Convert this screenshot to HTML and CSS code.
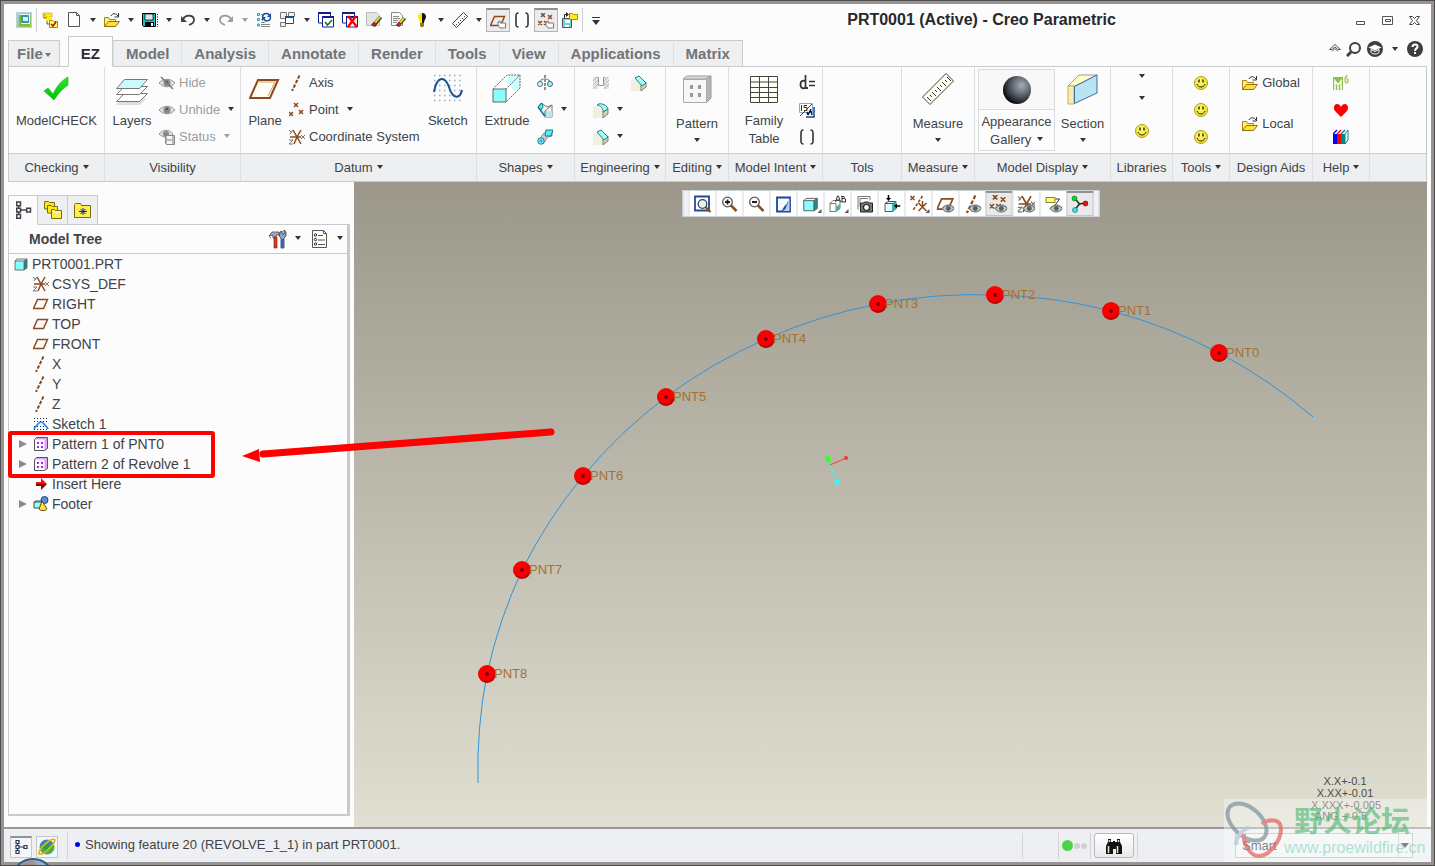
FILE: index.html
```
<!DOCTYPE html>
<html lang="en">
<head>
  <meta charset="UTF-8">
  <meta name="viewport" content="width=device-width, initial-scale=1.0">
  <title>PRT0001 (Active) - Creo Parametric</title>
  <link rel="stylesheet" href="styles.css">
</head>
<body>
  <!-- icon sprite -->
  <svg class="sprite" aria-hidden="true">
    <defs>
      <radialGradient id="ball" cx="45%" cy="40%" r="60%"><stop offset="0" stop-color="#f00"/><stop offset=".7" stop-color="#f80000"/><stop offset="1" stop-color="#a00000"/></radialGradient>
      <radialGradient id="sphere" cx="66%" cy="34%" r="70%"><stop offset="0" stop-color="#a4adb6"/><stop offset=".4" stop-color="#6a727a"/><stop offset=".8" stop-color="#2c3035"/><stop offset="1" stop-color="#050505"/></radialGradient>
      <radialGradient id="yolk" cx="45%" cy="40%" r="60%"><stop offset="0" stop-color="#ffff70"/><stop offset="1" stop-color="#f2dc1e"/></radialGradient>
      <linearGradient id="tick" x1="0" y1="0" x2="0" y2="1"><stop offset="0" stop-color="#2be82b"/><stop offset="1" stop-color="#00c000"/></linearGradient>
      <linearGradient id="appbg" x1="0" y1="0" x2="1" y2="1"><stop offset="0" stop-color="#9fd3e8"/><stop offset="1" stop-color="#8cc63f"/></linearGradient>
    </defs>
    <symbol id="i-app" viewBox="0 0 16 16"><rect x=".5" y=".5" width="15" height="15" fill="url(#appbg)" stroke="#b5d3e0"/><path d="M3 2h11v10H3z" fill="#e8f6fa"/><path d="M3 3h2v9h8v2H3z" fill="#8cb820"/><path d="M5 3h8v8H5z" fill="#3f93b5"/><path d="M7 5h5v4H7z" fill="#d9f2f7"/></symbol>
    <symbol id="i-tag" viewBox="0 0 16 16"><path d="M1 1h9v4H1z" fill="#ffe81a" stroke="#c8a400" stroke-width=".6"/><path d="M2 3h1M2 5v1h3v6h3" fill="none" stroke="#555"/><path d="M4 6h6v3H4z" fill="#ffe81a"/><path d="M7.500 8.500h3l1 1h4v6h-8z" fill="#ff6" stroke="#a88b00"/><path d="M9 12l2 2 3-4" fill="none" stroke="#c00" stroke-width="1.500"/></symbol>
    <symbol id="i-new" viewBox="0 0 16 16"><path d="M2.500 .5h8l3 3v11h-11z" fill="#fdfdfd" stroke="#555"/><path d="M10.500 .5v3h3" fill="none" stroke="#555"/></symbol>
    <symbol id="i-open" viewBox="0 0 16 16"><path d="M.5 14.500v-9h4l1 2h6v2" fill="#ffef7a" stroke="#a8861a"/><path d="M.5 14.500l4-5h11l-4 5z" fill="#ffe036" stroke="#8f7112"/><path d="M7 4c1-3 5-3 7 0M14.500 1v4h-4" fill="none" stroke="#333"/></symbol>
    <symbol id="i-save" viewBox="0 0 16 16"><path d="M.5 1.500h13v13h-12l-1-1z" fill="#17c3c3" stroke="#000"/><path d="M3 2h8v6H3z" fill="#fff" stroke="#000" stroke-width=".8"/><path d="M4 4h6M4 6h6" stroke="#aaa" stroke-width=".7"/><path d="M3 10h9v4H3z" fill="#000"/><path d="M9 11h2v3H9z" fill="#fff"/><path d="M15.500 2v13" stroke="#000" stroke-dasharray="1 1.500"/></symbol>
    <symbol id="i-undo" viewBox="0 0 16 16"><path d="M3 7c3-5 11-4 11 1 0 3-2 4-5 5" fill="none" stroke="currentColor" stroke-width="1.800"/><path d="M1 4v6h6z" fill="currentColor"/></symbol>
    <symbol id="i-redo" viewBox="0 0 16 16"><path d="M13 7C10 2 2 3 2 8c0 3 2 4 5 5" fill="none" stroke="currentColor" stroke-width="1.800"/><path d="M15 4v6H9z" fill="currentColor"/></symbol>
    <symbol id="i-regen" viewBox="0 0 16 16"><path d="M1.500 1.500h2v2h-2zM1.500 6.500h2v2h-2zM1.500 12h2v2h-2z" fill="#8ff" stroke="#33a0a8"/><path d="M5 10.500h4M5 12.500h9M5 14.500h9M5 2.500h1M5 7.500h1" stroke="#888"/><path d="M6.500 5c0-4 6-5 7-1M14.500 5c0 5-6 5-7 1" fill="none" stroke="#1c4e9c" stroke-width="1.500"/><path d="M15 1v4h-4zM6 9V5h4z" fill="#1c4e9c"/></symbol>
    <symbol id="i-windows" viewBox="0 0 16 16"><path d="M.5 10.500h5v4h-5zM8.500 .5h6v4h-6zM.5 .5h6v6h-6z" fill="#eee" stroke="#777"/><path d="M5.500 4.500h8v7h-8z" fill="#fff" stroke="#1f4a8c"/><path d="M5 4h9v2H5z" fill="#1f4a8c"/></symbol>
    <symbol id="i-winback" viewBox="0 0 16 16"><path d="M.5 1h12v10H.5z" fill="#fff" stroke="#10218f"/><path d="M0 0h13v2H0z" fill="#10218f"/><path d="M4.500 5h11v10h-11z" fill="#fff" stroke="#10218f"/><path d="M4 4h12v2H4z" fill="#10218f"/></symbol>
    <symbol id="i-wincheck" viewBox="0 0 16 16"><use href="#i-winback"/><path d="M7 10l2.500 3L14 8" fill="none" stroke="#15752b" stroke-width="1.600"/></symbol>
    <symbol id="i-winx" viewBox="0 0 16 16"><use href="#i-winback"/><path d="M6 4l9 11M14 4L6 15" stroke="#f00" stroke-width="2.400"/></symbol>
    <symbol id="i-erase" viewBox="0 0 16 16"><path d="M.5 .5h10l3 3v10H.5z" fill="#e4e4e0" stroke="#bbb"/><path d="M5 13l8-9 3 2-7 9z" fill="#222"/><path d="M8 10l5-6 2 1.500-5 6z" fill="#d9cf2c"/><path d="M6 12l2-2 2 2-2 3z" fill="#c22"/></symbol>
    <symbol id="i-erase2" viewBox="0 0 16 16"><path d="M1.500 .5h8l3 3v10h-11z" fill="#fafafa" stroke="#888"/><path d="M3 4.500h6M3 6.500h7M3 8.500h5M3 10.500h4" stroke="#888"/><path d="M6 13l7-8 3 2-7 8z" fill="#222"/><path d="M9 10l4-5 2 1.500-4 5z" fill="#d9cf2c"/><path d="M7 12l2-2 2 2-2 3z" fill="#c22"/></symbol>
    <symbol id="i-bulb" viewBox="0 0 16 16"><path d="M8 1a4 4 0 0 0-4 4c0 2 2 3 2 6h2z" fill="#ffe600"/><path d="M8 1a4 4 0 0 1 4 4c0 2-2 3-2 6H8z" fill="#111"/><path d="M6 11h4v3l-1 1H7l-1-1z" fill="#8a7d10"/></symbol>
    <symbol id="i-ruler" viewBox="0 0 16 16"><path d="M.5 11.500L11.500 .5l4 4L4.500 15.500z" fill="#f8f8f0" stroke="#444"/><path d="M4 12l1 1M6 10l1.500 1.500M8 8l1 1M10 6l1.500 1.500M12 4l1 1" stroke="#444"/></symbol>
    <symbol id="i-plane" viewBox="0 0 16 16"><path d="M4.500 3.500h10l-4 9H.5z" fill="none" stroke="#8c4a1d" stroke-width="1.500"/></symbol>
    <symbol id="i-hand" viewBox="0 0 16 16"><path d="M8 9l2-1v2h5.500v5H10l-2-3z" fill="#fff" stroke="#777"/></symbol>
    <symbol id="i-brackets" viewBox="0 0 16 16"><path d="M4.500 1C2 1 2 2 2 4v8c0 2 0 3 2.500 3M11.500 1C14 1 14 2 14 4v8c0 2 0 3-2.500 3" fill="none" stroke="#333" stroke-width="1.600"/></symbol>
    <symbol id="i-points" viewBox="0 0 16 16"><path d="M5 1l4 4M9 1L5 5M0 10l4 4M4 10l-4 4M10 8l4 4M14 8l-4 4" stroke="#8c4a1d" stroke-width="1.500"/></symbol>
    <symbol id="i-points4" viewBox="0 0 16 16"><path d="M3 0l4 4M7 0L3 4M10 2l4 4M14 2l-4 4M0 8l4 4M4 8l-4 4M6 8l4 4M10 8l-4 4" stroke="#8c4a1d" stroke-width="1.500"/></symbol>
    <symbol id="i-axis" viewBox="0 0 16 16"><path d="M10.500 .5L3 16" fill="none" stroke="#8c4a1d" stroke-width="2" stroke-dasharray="3.500 1.500"/></symbol>
    <symbol id="i-csys" viewBox="0 0 16 16"><path d="M8 8L4 1M8 8l4-7M8 8H1M8 8l-3 7M8 8l4 7M8 8h4" stroke="#8c4a1d" stroke-width="1.500"/><path d="M0 1l3 3M4 1L1 5M12 6l4 4M16 6l-4 4M0 11h4l-4 4h4" fill="none" stroke="#777"/></symbol>
    <symbol id="i-foldersave" viewBox="0 0 16 16"><path d="M.5 6.500h9v9h-9z" fill="#6dd5d5" stroke="#456"/><path d="M3 8h5v3H3zM3 13h4v2H3z" fill="#fff"/><path d="M7.500 1.500h3l1 1h4v5h-8z" fill="#ffec1c" stroke="#a88b00"/><path d="M2.500 6V2.500H5" fill="none" stroke="#222"/><path d="M4 0l3 2.500L4 5z" fill="#222"/></symbol>
    <symbol id="i-eye" viewBox="0 0 16 16"><path d="M0 8c4-5 12-5 16 0-4 5-12 5-16 0z" fill="#ddd" stroke="#999"/><circle cx="8" cy="8" r="3.500" fill="#888"/><circle cx="8" cy="7" r="1.200" fill="#555"/></symbol>
    <symbol id="i-hide" viewBox="0 0 16 16"><use href="#i-eye"/><path d="M2 2l12 12" stroke="#777" stroke-width="1.500"/></symbol>
    <symbol id="i-status" viewBox="0 0 16 16"><path d="M0 5c4-5 10-5 14 0-4 4-10 4-14 0z" fill="#ddd" stroke="#999"/><circle cx="7" cy="5" r="3" fill="#888"/><path d="M6.500 6.500h9v9h-8l-1-1z" fill="#bbb" stroke="#888"/><path d="M8 7h5v3H8zM8 12h5v3H8z" fill="#f4f4f4"/></symbol>
    <symbol id="i-eyelet" viewBox="0 0 16 16"><path d="M5 12c3-4 8-4 11 0-3 4-8 4-11 0z" fill="#d0ccb4" stroke="#777"/><circle cx="10.500" cy="12" r="2.200" fill="#3f6485"/></symbol>
    <symbol id="i-cube" viewBox="0 0 16 16"><path d="M2 5h9v9H2z" fill="#8ff"/><path d="M2 5l2-2h10l-3 2z" fill="#d5ffff"/><path d="M11 5l3-2v9l-3 2z" fill="#1f8c90"/><path d="M2 5h9v9H2zM2 5l2-2h10l-3 2M14 3v9l-3 2" fill="none" stroke="#555" stroke-width=".8"/></symbol>
    <symbol id="i-revolve" viewBox="0 0 16 16"><path d="M8 0v16" stroke="#222" stroke-dasharray="3 1"/><path d="M2 7c2-4 10-4 12 0M10 4l3 3M6 4L3 6" fill="none" stroke="#888"/><circle cx="3" cy="9" r="2.500" fill="#cff" stroke="#567"/><circle cx="13" cy="9" r="2.500" fill="#8ff" stroke="#567"/></symbol>
    <symbol id="i-blend" viewBox="0 0 16 16"><path d="M4 1l6 4 5-2v12H8L1 5z" fill="#eef8f8" stroke="#777"/><path d="M7 9h8v6H8z" fill="#bfe6e6"/><path d="M8 9l7-6M8 9v6" stroke="#777"/><path d="M1 5l4-4 1 4-2 3z" fill="#5ee" stroke="#157f88"/><path d="M1 5l7 9" stroke="#157f88" stroke-width="1.500"/></symbol>
    <symbol id="i-sweep" viewBox="0 0 16 16"><path d="M1 10c4 0 3-5 8-7h6v4c-6 0-6 5-9 8" fill="#ccc" stroke="#888"/><path d="M9 1h7l-2 6H8z" fill="#5ee" stroke="#157f88"/><circle cx="4" cy="12" r="3.200" fill="#7ff" stroke="#157f88"/><circle cx="4" cy="12" r="1" fill="#fff" stroke="#157f88"/></symbol>
    <symbol id="i-hole" viewBox="0 0 16 16"><path d="M0 2h5v12H0zM11 2h5v12h-5z" fill="#e2e2e2"/><path d="M0 6l4-4M0 10l5-5M0 14l5-5M11 6l4-4M11 10l5-5M11 14l5-5" stroke="#bbb"/><path d="M4 2.500h1.500v8h5v-8H12" fill="none" stroke="#999"/></symbol>
    <symbol id="i-round" viewBox="0 0 16 16"><path d="M0 4h5l5 5v7H0z" fill="#f0efe0"/><path d="M10 10l5-3v5l-5 4z" fill="#d6d4b4" stroke="#666" stroke-width=".8"/><path d="M4 3c1-2 9-2 11 4l-5 3c0-4-2-6-6-7z" fill="#9ff" stroke="#39737a"/></symbol>
    <symbol id="i-chamfer" viewBox="0 0 16 16"><path d="M0 4h5l5 6v6H0z" fill="#f0efe0"/><path d="M10 10l5-3v5l-5 4z" fill="#d6d4b4" stroke="#666" stroke-width=".8"/><path d="M4 3l4-2 7 7-4 3z" fill="#9ff" stroke="#39737a"/></symbol>
    <symbol id="i-dim" viewBox="0 0 16 16"><path d="M6.500 0v14M6.500 7c-1-2-5-2-5 2.500s4 4.500 5 2.500M10 6.500h6M10 10.500h6" fill="none" stroke="#333" stroke-width="1.700"/><path d="M7 12h2v2H7z" fill="#333"/></symbol>
    <symbol id="i-switch" viewBox="0 0 16 16"><path d="M.5 1.500h13v9H.5z" fill="#fff" stroke="#88a8d0"/><path d="M2.500 3v6M8 3.500H5v2h3v3H5" fill="none" stroke="#333"/><path d="M7 15h8V5" fill="none" stroke="#1446a0" stroke-width="1.500"/><path d="M1 14L13 2" stroke="#1446a0"/><path d="M8 10l1 3M12 7l-3 6M12 9l1 4" stroke="#111" stroke-width="1.400"/></symbol>
    <symbol id="i-smile" viewBox="0 0 16 16"><circle cx="8" cy="8" r="6.500" fill="url(#yolk)" stroke="#a9a02a"/><path d="M6 4.500v3M10 4.500v3" stroke="#222" stroke-width="1.400"/><path d="M4 9c1.500 4 6.500 4 8 0" fill="none" stroke="#222"/></symbol>
    <symbol id="i-m6" viewBox="0 0 16 16"><path d="M0 2h10v13H0z" fill="#8fc048"/><path d="M2 15V6l3 4 3-4v9M5 11v4" fill="none" stroke="#fff" stroke-width="1.500"/><path d="M14.500 .8c-3 0-3 7-1 7s2-4 0-4" fill="none" stroke="#a5cc66" stroke-width="1.500"/></symbol>
    <symbol id="i-heart" viewBox="0 0 16 16"><path d="M8 15L2 9C0 6 1 2 4 2c2 0 3 1 4 3 1-2 2-3 4-3 3 0 4 4 2 7z" fill="#f00"/></symbol>
    <symbol id="i-books" viewBox="0 0 16 16"><path d="M0 5l4-4h11l-3 4z" fill="#fff"/><path d="M0 5h4v10H0z" fill="#00f"/><path d="M4 5h4v10H4z" fill="#f00"/><path d="M8 5h4v10H8z" fill="#088"/><path d="M12 5l3-4v10l-3 4z" fill="#fff" stroke="#088"/><path d="M0 5l4-4" stroke="#00f" stroke-width="1.500"/><path d="M4 5l4-4" stroke="#f00" stroke-width="1.500"/><path d="M8 5l4-4" stroke="#088" stroke-width="1.500"/></symbol>
    <symbol id="i-tree" viewBox="0 0 16 16"><path d="M3 1.500h3v3H3zM3 6.500h3v3H3zM3 11.500h3v3H3zM11 6.500h3v3h-3zM4.500 4.500v2M4.500 9.500v2M6 8h5" fill="none" stroke="currentColor" stroke-width="1.200"/></symbol>
    <symbol id="i-folders" viewBox="0 0 20 20"><path d="M1.500 9V1.500h4l1 1h5V9z" fill="#ffe81a" stroke="#7a6a10"/><path d="M4.500 13V5.500h4l1 1h5V13z" fill="#ffe81a" stroke="#7a6a10"/><path d="M8.500 18.500v-9h3l1 1h6v8z" fill="#ffee4c" stroke="#7a6a10"/><path d="M10 12h7" stroke="#fff"/></symbol>
    <symbol id="i-favorites" viewBox="0 0 20 20"><path d="M1.500 17.500v-13l1-1h5l1 2h9v12z" fill="#ffee4c" stroke="#7a6a10"/><path d="M10 8v7M6 11.500h8M7.500 9l5 5M12.500 9l-5 5" stroke="#0a1ec0"/></symbol>
    <symbol id="i-tools" viewBox="0 0 20 20"><path d="M1 7l3-4h7v3H8v3H5V6z" fill="#aab" stroke="#444" stroke-width=".8"/><path d="M6 8h3v11H6z" fill="#d33f1c" stroke="#711" stroke-width=".6"/><path d="M12 3l2-1v3h2V1l2 2v4l-2 2v10h-3V9l-2-2z" fill="#8ea6cf" stroke="#333" stroke-width=".8"/><path d="M13 10h3v8h-3z" fill="#2e62c8"/><path d="M1 7l2 2" stroke="#1aa"/></symbol>
    <symbol id="i-list" viewBox="0 0 20 20"><path d="M2.500 1.500h11l3 3v14h-14z" fill="#fffff6" stroke="#555"/><path d="M13.500 1.500v3h3M8 6.500h5M8 11h7M8 15.500h7" fill="none" stroke="#555"/><circle cx="5.500" cy="6" r="1.200" fill="#fff" stroke="#222"/><circle cx="5.500" cy="10.500" r="1.200" fill="#fff" stroke="#222"/><circle cx="5.500" cy="15" r="1.200" fill="#fff" stroke="#222"/></symbol>
    <symbol id="i-sketch" viewBox="0 0 16 16"><path d="M1 2.500h14M1 5.500h14M1 10.500h14M1 13.500h14" stroke="#124" stroke-dasharray="1 2"/><path d="M1 13c1-2 2-3 3-4 3-4 5-4 8 0 1 1 2 2 3 4" fill="none" stroke="#1a86f0" stroke-width="1.600"/></symbol>
    <symbol id="i-pattern" viewBox="0 0 16 16"><path d="M1.500 3.500h10v10h-10z" fill="#fbf5ff"/><path d="M1.500 3.500l2-2h11l-3 2zM11.500 3.500l3-2v11l-3 2z" fill="#d9a8f0"/><path d="M1.500 3.500v11h10l3-2v-11h-11z" fill="none" stroke="#555"/><path d="M4 6h2v2H4zM8 6h2v2H8zM4 10h2v2H4zM8 10h2v2H8z" fill="#9a30d8"/></symbol>
    <symbol id="i-insert" viewBox="0 0 16 16"><path d="M3 6h5V2l6 6H3z" fill="#f01010"/><path d="M3 8h11l-6 6v-4H3z" fill="#8c0000"/></symbol>
    <symbol id="i-footer" viewBox="0 0 16 16"><path d="M1 6h8v6H1z" fill="#9ff" stroke="#355"/><path d="M1 6l2-1h8" fill="none" stroke="#355"/><circle cx="11.500" cy="4" r="3.500" fill="#5b8be0" stroke="#223d7a"/><path d="M9 5l5 8c-1 2-7 2-8 0z" fill="#ffe23c" stroke="#5c4a08"/></symbol>
    <symbol id="i-mag" viewBox="0 0 18 18"><path d="M10 10l6 6" stroke="#8c4a1d" stroke-width="2.500"/><circle cx="7" cy="7" r="4.800" fill="#fdfdfd" stroke="#555" stroke-width="1.300"/></symbol>
    <symbol id="i-fit" viewBox="0 0 18 18"><path d="M1.500 1.500h14v14h-14z" fill="#fff" stroke="#1f4a9c" stroke-width="1.800"/><path d="M12 12l5 5" stroke="#8c4a1d" stroke-width="2.200"/><circle cx="9" cy="9" r="4.300" fill="#e6f2f8" stroke="#444" stroke-width="1.300"/></symbol>
    <symbol id="i-zoomin" viewBox="0 0 18 18"><use href="#i-mag"/><path d="M7 4.500v5M4.500 7h5" stroke="#222" stroke-width="1.800"/></symbol>
    <symbol id="i-zoomout" viewBox="0 0 18 18"><use href="#i-mag"/><path d="M4.500 7h5" stroke="#222" stroke-width="1.800"/></symbol>
    <symbol id="i-repaint" viewBox="0 0 18 18"><path d="M2.500 2.500h13v14h-13z" fill="#f2fafd" stroke="#1c469a" stroke-width="1.800"/><path d="M15 3v13H7c4-3 7-7 8-13z" fill="#bcd4ea"/><path d="M14 5c-1 3-2 5-4 6l-3 5c3 0 5-3 5-5 1-1 2-4 2-6z" fill="#1e56ac"/></symbol>
    <symbol id="i-ab" viewBox="0 0 18 18"><path d="M1.500 8.500h6v8h-6z" fill="#fff" stroke="#777"/><path d="M1.500 8.500l3-3h7v8l-4 3" fill="none" stroke="#777"/><path d="M8 12l3-3v5l-3 2z" fill="#28aeb3"/><path d="M7 7l2-6h1l2 6M8 5h3M13.500 1v6M13 1.500h2.500l.5 1v1h-2.500M16 4h1v3h-4" fill="none" stroke="#333"/></symbol>
    <symbol id="i-camera" viewBox="0 0 18 18"><path d="M2.500 14.500v-13h12v4M4.500 3.500h8M4.500 3.500v8" fill="none" stroke="#777"/><path d="M5 8h3l1-1h4l1 1h3v9H5z" fill="#777" stroke="#222"/><circle cx="11" cy="12.500" r="3" fill="#fff" stroke="#222" stroke-width="1.200"/></symbol>
    <symbol id="i-explode" viewBox="0 0 18 18"><path d="M2.500 8.500h8v8h-8zM2.500 8.500l3-2h8l-3 2" fill="#dff" stroke="#555"/><path d="M10 9l4-3v8l-4 3z" fill="#28aeb3"/><path d="M6 0v4M18 11h-4" stroke="#000" stroke-width="1.500"/><path d="M3.500 3h5L6 6zM14.500 8.500v5L11.500 11z" fill="#000"/></symbol>
    <symbol id="i-datums" viewBox="0 0 18 18"><path d="M1 1l4 4M5 1L1 5M9 8l8 8M17 8L9 16M13 6v5" stroke="#8c4a1d" stroke-width="1.500"/><path d="M13 1L3 16" stroke="#8c4a1d" stroke-width="1.500" stroke-dasharray="3 1.500"/></symbol>
    <symbol id="i-note" viewBox="0 0 18 18"><path d="M1.500 2.500h9v5h-9z" fill="#ffff7c" stroke="#8c8020"/><path d="M11 4h4l-5 7h3" fill="none" stroke="#333"/></symbol>
    <symbol id="i-spin" viewBox="0 0 18 18"><path d="M4 3l5 6 6-1M9 9l-5 6" fill="none" stroke="#222" stroke-width="1.500"/><circle cx="4" cy="3.500" r="2.500" fill="#1ed01e" stroke="#063" stroke-width=".6"/><circle cx="15" cy="8.500" r="2.500" fill="#e01818" stroke="#600" stroke-width=".6"/><circle cx="4.500" cy="15" r="2.500" fill="#3fe0e8" stroke="#066" stroke-width=".6"/></symbol>
    <symbol id="i-globe" viewBox="0 0 18 18"><circle cx="9" cy="9" r="7.500" fill="#35b54a"/><path d="M2 7c2-6 10-7 13-1L8 13z" fill="#3a78d4"/><path d="M6 5c2 2 6 0 7 4-2 4-4 3-6 6z" fill="#23a836"/><path d="M1 16c-1-5 13-18 16-14-1 5-12 16-16 14z" fill="none" stroke="#e8b010" stroke-width="1.600"/></symbol>
    <symbol id="i-binoc" viewBox="0 0 18 18"><path d="M3 2h3v3h2V4h2v1h2V2h3v3l2 4v8h-6v-5H8v5H1V9l2-4z" fill="#111"/><path d="M3.500 9v7M12.500 9v7M4.500 3v2M13.500 3v2" stroke="#e5e0c8" stroke-width="1.600"/></symbol>
  </svg>

  <header class="titlebar">
    <nav class="quick" aria-label="Quick access">
      <button class="tool app" aria-label="Window menu"><svg class="ico"><use href="#i-app"/></svg></button>
      <span class="sep"></span>
      <button class="tool" aria-label="Select"><svg class="ico"><use href="#i-tag"/></svg></button>
      <button class="tool" aria-label="New"><svg class="ico"><use href="#i-new"/></svg></button>
      <button class="drop" aria-label="New options"><i class="caret"></i></button>
      <button class="tool" aria-label="Open"><svg class="ico"><use href="#i-open"/></svg></button>
      <button class="drop" aria-label="Open options"><i class="caret"></i></button>
      <button class="tool" aria-label="Save"><svg class="ico"><use href="#i-save"/></svg></button>
      <button class="drop" aria-label="Save options"><i class="caret"></i></button>
      <button class="tool" aria-label="Undo"><svg class="ico"><use href="#i-undo"/></svg></button>
      <button class="drop" aria-label="Undo list"><i class="caret"></i></button>
      <button class="tool off" aria-label="Redo"><svg class="ico"><use href="#i-redo"/></svg></button>
      <button class="drop off" aria-label="Redo list"><i class="caret"></i></button>
      <button class="tool" aria-label="Regenerate"><svg class="ico"><use href="#i-regen"/></svg></button>
      <button class="tool" aria-label="Windows"><svg class="ico"><use href="#i-windows"/></svg></button>
      <button class="drop" aria-label="Window list"><i class="caret"></i></button>
      <button class="tool" aria-label="Activate window"><svg class="ico"><use href="#i-wincheck"/></svg></button>
      <button class="tool" aria-label="Close window"><svg class="ico"><use href="#i-winx"/></svg></button>
      <button class="tool" aria-label="Erase current"><svg class="ico"><use href="#i-erase"/></svg></button>
      <button class="tool" aria-label="Erase not displayed"><svg class="ico"><use href="#i-erase2"/></svg></button>
      <button class="tool" aria-label="Light"><svg class="ico"><use href="#i-bulb"/></svg></button>
      <button class="drop" aria-label="Light options"><i class="caret"></i></button>
      <button class="tool" aria-label="Measure"><svg class="ico"><use href="#i-ruler"/></svg></button>
      <button class="drop" aria-label="Measure options"><i class="caret"></i></button>
      <button class="tool pressed" aria-label="Plane tags"><svg class="ico"><use href="#i-plane"/><use href="#i-hand"/></svg></button>
      <button class="tool" aria-label="Parameters"><svg class="ico"><use href="#i-brackets"/></svg></button>
      <button class="tool pressed" aria-label="Point tags"><svg class="ico"><use href="#i-points4"/><use href="#i-hand"/></svg></button>
      <button class="tool" aria-label="Save a copy"><svg class="ico"><use href="#i-foldersave"/></svg></button>
      <span class="sep"></span>
      <button class="tool" aria-label="Customize"><i class="caret barred"></i></button>
    </nav>
    <h1>PRT0001 (Active) - Creo Parametric</h1>
    <div class="window-buttons">
      <button aria-label="Minimize"><svg width="11" height="11" viewBox="0 0 11 11"><path d="M1.500 6.500h8v3h-8z" fill="none" stroke="#555"/></svg></button>
      <button aria-label="Maximize"><svg width="11" height="11" viewBox="0 0 11 11"><path d="M.5 1.500h10v8H.5zM3.500 4.500h5v2h-5z" fill="none" stroke="#555"/></svg></button>
      <button aria-label="Close"><svg width="11" height="11" viewBox="0 0 11 11"><path d="M.5 1.500h3l2 2 2-2h3L7.500 5.500l3 4h-3l-2-2-2 2h-3l3-4z" fill="none" stroke="#444"/></svg></button>
    </div>
  </header>

  <div class="tabrow">
    <button class="tab file">File<i class="caret"></i></button>
    <nav class="tabs">
      <button class="tab active">EZ</button>
      <button class="tab">Model</button>
      <button class="tab">Analysis</button>
      <button class="tab">Annotate</button>
      <button class="tab">Render</button>
      <button class="tab">Tools</button>
      <button class="tab">View</button>
      <button class="tab">Applications</button>
      <button class="tab">Matrix</button>
    </nav>
    <div class="help-buttons">
      <button aria-label="Minimize ribbon"><svg width="12" height="12" viewBox="0 0 12 12"><path d="M.5 6.500L6 1.500l5.500 5H9L6 4 3 6.500zM3 8.500l3-3 3 3" fill="none" stroke="#555"/></svg></button>
      <button aria-label="Search"><svg width="16" height="16" viewBox="0 0 16 16"><path d="M5 11l-4 4" stroke="#3c3f42" stroke-width="3"/><circle cx="9" cy="7" r="5" fill="#f8fbfd" stroke="#3c3f42" stroke-width="2"/></svg></button>
      <button aria-label="Learning"><svg width="16" height="16" viewBox="0 0 16 16"><circle cx="8" cy="8" r="8" fill="#3c3f42"/><path d="M1.500 6.500L8 3.500l6.500 3L8 9.500z" fill="#fff"/><path d="M4 8.500v3c2 2 6 2 8 0v-3l-4 2z" fill="none" stroke="#fff"/></svg></button>
      <button class="drop" aria-label="Learning options"><i class="caret"></i></button>
      <button aria-label="Help"><svg width="16" height="16" viewBox="0 0 16 16"><circle cx="8" cy="8" r="8" fill="#3c3f42"/><path d="M5.500 6c0-3.500 5.500-3.500 5 0C10.300 7.500 8 7.500 8 10" fill="none" stroke="#fff" stroke-width="2"/><path d="M7 11h2v2H7z" fill="#fff"/></svg></button>
    </div>
  </div>

  <section class="ribbon">
    <div class="group checking">
      <div class="body center">
        <button class="big"><svg class="art" viewBox="0 0 32 32"><path d="M4 18l4-3 5 6C17 13 21 8 28 4v8c-6 4-10 9-14 15z" fill="url(#tick)" stroke="#11b311" stroke-width=".6"/></svg>ModelCHECK</button>
      </div>
      <footer><button>Checking <i class="caret"></i></button></footer>
    </div>
    <div class="group visibility">
      <div class="body">
        <button class="big w54"><svg class="art" viewBox="0 0 32 32"><path d="M6 25h25l-7 7H0z" fill="#ccc" opacity=".6"/><path d="M8.500 20.500h23l-8 8H.5z" fill="#fff" stroke="#777"/><path d="M8.500 13.500h23l-8 8H.5z" fill="#fff" stroke="#777"/><path d="M8.500 6.500h23l-8 9H.5z" fill="#c8fcff" stroke="#777"/></svg>Layers</button>
        <div class="stack">
          <button class="row off"><svg class="ico"><use href="#i-hide"/></svg>Hide</button>
          <button class="row off"><svg class="ico"><use href="#i-eye"/></svg>Unhide <i class="caret dark"></i></button>
          <button class="row off"><svg class="ico"><use href="#i-status"/></svg>Status <i class="caret"></i></button>
        </div>
      </div>
      <footer>Visibility</footer>
    </div>
    <div class="group datum">
      <div class="body">
        <button class="big w48"><svg class="art" viewBox="0 0 32 32"><path d="M9 7h20l-8 18H1z" fill="#fffef4" stroke="#8c4a1d" stroke-width="2"/><path d="M10 9h16l-7 14" fill="none" stroke="#c9a26c"/></svg>Plane</button>
        <div class="stack">
          <button class="row"><svg class="ico"><use href="#i-axis"/></svg>Axis</button>
          <button class="row"><svg class="ico"><use href="#i-points"/></svg>Point <i class="caret"></i></button>
          <button class="row"><svg class="ico"><use href="#i-csys"/></svg>Coordinate System</button>
        </div>
        <button class="big end"><svg class="art" viewBox="0 0 32 32"><path d="M2 2.500h29M2 7.500h29M2 12.500h29M2 17.500h29M2 22.500h29M2 27.500h29" stroke="#8fadca" stroke-width="1.500" stroke-dasharray="1.500 3.500"/><path d="M2 19C5 2 13 3 17 14c4 13 11 12 13 3" fill="none" stroke="#1c4e96" stroke-width="2"/></svg>Sketch</button>
      </div>
      <footer><button>Datum <i class="caret"></i></button></footer>
    </div>
    <div class="group shapes">
      <div class="body">
        <button class="big w60"><svg class="art" viewBox="0 0 32 32"><path d="M2 16L16 2h13v13L15 29z" fill="#fff"/><path d="M16 9l2-7h11v12l-6 4z" fill="#cff"/><path d="M2 16L16 2h13L15 16M29 2v13L15 29" fill="none" stroke="#666" stroke-dasharray="2 1"/><path d="M2 16h13v13H2z" fill="#8ff" stroke="#666"/></svg>Extrude</button>
        <div class="stack">
          <button class="row" aria-label="Revolve"><svg class="ico"><use href="#i-revolve"/></svg></button>
          <button class="row" aria-label="Blend"><svg class="ico"><use href="#i-blend"/></svg> <i class="caret"></i></button>
          <button class="row" aria-label="Sweep"><svg class="ico"><use href="#i-sweep"/></svg></button>
        </div>
      </div>
      <footer><button>Shapes <i class="caret"></i></button></footer>
    </div>
    <div class="group engineering">
      <div class="body">
        <div class="stack inset">
          <button class="row" aria-label="Hole"><svg class="ico"><use href="#i-hole"/></svg></button>
          <button class="row" aria-label="Round"><svg class="ico"><use href="#i-round"/></svg> <i class="caret"></i></button>
          <button class="row" aria-label="Edge chamfer"><svg class="ico"><use href="#i-chamfer"/></svg> <i class="caret"></i></button>
        </div>
        <div class="stack">
          <button class="row" aria-label="Chamfer"><svg class="ico"><use href="#i-chamfer"/></svg></button>
        </div>
      </div>
      <footer><button>Engineering <i class="caret"></i></button></footer>
    </div>
    <div class="group editing">
      <div class="body center">
        <button class="big menu"><svg class="art" viewBox="0 0 32 32"><path d="M2 6l4-3h24l-4 3z" fill="#ddd" stroke="#999"/><path d="M25 6l5-3v22l-5 5z" fill="#b5b5b5" stroke="#999"/><path d="M2.500 6.500h23v23h-23z" fill="#f7f7f7" stroke="#aaa"/><path d="M9 12h3v4H9zM17 12h3v4h-3zM9 20h3v4H9zM17 20h3v4h-3z" fill="#999"/></svg>Pattern <i class="caret"></i></button>
      </div>
      <footer><button>Editing <i class="caret"></i></button></footer>
    </div>
    <div class="group intent">
      <div class="body">
        <button class="big w70"><svg class="art" viewBox="0 0 32 32"><path d="M2.500 3.500h27v26h-27z" fill="#fffff4" stroke="#444"/><path d="M11.500 3v27M20.500 3v27M2 9h28M2 14.500h28M2 19.500h28M2 24.500h28" stroke="#444"/></svg>Family<br>Table</button>
        <div class="stack">
          <button class="row" aria-label="Relations"><svg class="ico"><use href="#i-dim"/></svg></button>
          <button class="row" aria-label="Switch dimensions"><svg class="ico"><use href="#i-switch"/></svg></button>
          <button class="row" aria-label="Parameters"><svg class="ico"><use href="#i-brackets"/></svg></button>
        </div>
      </div>
      <footer><button>Model Intent <i class="caret"></i></button></footer>
    </div>
    <div class="group tols">
      <div class="body"></div>
      <footer>Tols</footer>
    </div>
    <div class="group measure">
      <div class="body center">
        <button class="big menu"><svg class="art" viewBox="0 0 32 32"><path d="M.5 24L24 .5l7.500 7.500L8 31.500z" fill="#fffff4" stroke="#444"/><path d="M5 24l4 4M8 22l2 2M10 19l4 4M13 17l2 2M15 14l4 4M18 12l2 2M20 9l4 4M23 7l2 2M25 4l4 4" stroke="#333"/></svg>Measure <i class="caret"></i></button>
      </div>
      <footer><button>Measure <i class="caret"></i></button></footer>
    </div>
    <div class="group display">
      <div class="body">
        <button class="gallery"><span class="preview"><svg width="28" height="28" viewBox="0 0 28 28"><circle cx="14" cy="14" r="14" fill="url(#sphere)"/></svg></span><span>Appearance<br>Gallery <i class="caret"></i></span></button>
        <button class="big menu fill"><svg class="art" viewBox="0 0 32 32"><path d="M1 13L12 2h18L8 13z" fill="#ffffc4" stroke="#999"/><path d="M1 13h6v18H1z" fill="#f7ecb5" stroke="#c9b050"/><path d="M7.500 13.500L30 2v18L7.500 30.500z" fill="#b9e4f4" stroke="#3d6ea5"/></svg>Section <i class="caret"></i></button>
      </div>
      <footer><button>Model Display <i class="caret"></i></button></footer>
    </div>
    <div class="group libraries">
      <div class="body center">
        <div class="stack loose">
          <button class="row" aria-label="Library 1"><i class="caret"></i></button>
          <button class="row" aria-label="Library 2"><i class="caret"></i></button>
          <button class="row" aria-label="Library 3"><svg class="ico"><use href="#i-smile"/></svg></button>
        </div>
      </div>
      <footer>Libraries</footer>
    </div>
    <div class="group tools">
      <div class="body center">
        <div class="stack">
          <button class="row" aria-label="Tool 1"><svg class="ico"><use href="#i-smile"/></svg></button>
          <button class="row" aria-label="Tool 2"><svg class="ico"><use href="#i-smile"/></svg></button>
          <button class="row" aria-label="Tool 3"><svg class="ico"><use href="#i-smile"/></svg></button>
        </div>
      </div>
      <footer><button>Tools <i class="caret"></i></button></footer>
    </div>
    <div class="group aids">
      <div class="body center">
        <div class="stack wide">
          <button class="row"><svg class="ico"><use href="#i-open"/></svg>Global</button>
          <button class="row"><svg class="ico"><use href="#i-open"/></svg>Local</button>
        </div>
      </div>
      <footer>Design Aids</footer>
    </div>
    <div class="group help">
      <div class="body center">
        <div class="stack">
          <button class="row" aria-label="Portal"><svg class="ico"><use href="#i-m6"/></svg></button>
          <button class="row" aria-label="Favorites"><svg class="ico"><use href="#i-heart"/></svg></button>
          <button class="row" aria-label="Manuals"><svg class="ico"><use href="#i-books"/></svg></button>
        </div>
      </div>
      <footer><button>Help <i class="caret"></i></button></footer>
    </div>
    <div class="group rest">
      <div class="body"></div>
      <footer></footer>
    </div>
  </section>

  <main>
    <aside class="side">
      <nav class="side-tabs">
        <button class="active" aria-label="Model tree"><svg class="ico20"><use href="#i-tree"/></svg></button>
        <button aria-label="Folder browser"><svg class="ico20"><use href="#i-folders"/></svg></button>
        <button aria-label="Favorites"><svg class="ico20"><use href="#i-favorites"/></svg></button>
      </nav>
      <div class="panel">
        <div class="panel-head">
          <h2>Model Tree</h2>
          <button aria-label="Settings"><svg class="ico20"><use href="#i-tools"/></svg></button>
          <button class="drop" aria-label="Settings menu"><i class="caret"></i></button>
          <button aria-label="Show"><svg class="ico20"><use href="#i-list"/></svg></button>
          <button class="drop" aria-label="Show menu"><i class="caret"></i></button>
        </div>
        <ul class="tree">
          <li class="root"><svg class="ico"><use href="#i-cube"/></svg>PRT0001.PRT</li>
          <li><svg class="ico"><use href="#i-csys"/></svg>CSYS_DEF</li>
          <li><svg class="ico"><use href="#i-plane"/></svg>RIGHT</li>
          <li><svg class="ico"><use href="#i-plane"/></svg>TOP</li>
          <li><svg class="ico"><use href="#i-plane"/></svg>FRONT</li>
          <li><svg class="ico"><use href="#i-axis"/></svg>X</li>
          <li><svg class="ico"><use href="#i-axis"/></svg>Y</li>
          <li><svg class="ico"><use href="#i-axis"/></svg>Z</li>
          <li><svg class="ico"><use href="#i-sketch"/></svg>Sketch 1</li>
          <li class="closed"><svg class="ico"><use href="#i-pattern"/></svg>Pattern 1 of PNT0</li>
          <li class="closed"><svg class="ico"><use href="#i-pattern"/></svg>Pattern 2 of Revolve 1</li>
          <li><svg class="ico"><use href="#i-insert"/></svg>Insert Here</li>
          <li class="closed"><svg class="ico"><use href="#i-footer"/></svg>Footer</li>
        </ul>
      </div>
    </aside>

    <section class="canvas">
      <svg class="scene" viewBox="354 182 1073 645">
        <path class="curve" d="M478 783A503 503 0 0 1 487 674A503 503 0 0 1 522 570A503 503 0 0 1 583 476A503 503 0 0 1 666 397A503 503 0 0 1 766 339A503 503 0 0 1 878 304A503 503 0 0 1 995 295A503 503 0 0 1 1111 311A503 503 0 0 1 1219 353A503 503 0 0 1 1313 417"/>
        <g fill="url(#ball)">
          <circle cx="1219" cy="353" r="9"/><circle cx="1111" cy="311" r="9"/><circle cx="995" cy="295" r="9"/>
          <circle cx="878" cy="304" r="9"/><circle cx="766" cy="339" r="9"/><circle cx="666" cy="397" r="9"/>
          <circle cx="583" cy="476" r="9"/><circle cx="522" cy="570" r="9"/><circle cx="487" cy="674" r="9"/>
        </g>
        <g fill="#7a0010">
          <circle cx="1219" cy="353" r="2"/><circle cx="1111" cy="311" r="2"/><circle cx="995" cy="295" r="2"/>
          <circle cx="878" cy="304" r="2"/><circle cx="766" cy="339" r="2"/><circle cx="666" cy="397" r="2"/>
          <circle cx="583" cy="476" r="2"/><circle cx="522" cy="570" r="2"/><circle cx="487" cy="674" r="2"/>
        </g>
        <g class="labels">
          <text x="1226" y="357">PNT0</text><text x="1118" y="315">PNT1</text><text x="1002" y="299">PNT2</text>
          <text x="885" y="308">PNT3</text><text x="773" y="343">PNT4</text><text x="673" y="401">PNT5</text>
          <text x="590" y="480">PNT6</text><text x="529" y="574">PNT7</text><text x="494" y="678">PNT8</text>
        </g>
        <g fill="none">
          <path d="M830 465l16-7" stroke="#f33"/><path d="M830 465l7 16" stroke="#2ff"/><path d="M830 465l-2-6" stroke="#3f3"/>
        </g>
        <circle cx="828" cy="459" r="3" fill="#3f3"/><circle cx="846" cy="458" r="2" fill="#f33"/><circle cx="837" cy="482" r="2.500" fill="#2ff"/>
        <g class="tolerance">
          <text x="1345" y="785">X.X+-0.1</text>
          <text x="1345" y="797">X.XX+-0.01</text>
          <text x="1346" y="809">X.XXX+-0.005</text>
          <text x="1341" y="820">ANG.+-0.5</text>
        </g>
      </svg>
      <nav class="viewbar" aria-label="View">
        <button aria-label="Refit"><svg class="ico18"><use href="#i-fit"/></svg></button>
        <button aria-label="Zoom in"><svg class="ico18"><use href="#i-zoomin"/></svg></button>
        <button aria-label="Zoom out"><svg class="ico18"><use href="#i-zoomout"/></svg></button>
        <button aria-label="Repaint"><svg class="ico18"><use href="#i-repaint"/></svg></button>
        <button class="more" aria-label="Display style"><svg class="ico18"><use href="#i-cube"/></svg></button>
        <button class="more" aria-label="Saved orientations"><svg class="ico18"><use href="#i-ab"/></svg></button>
        <button aria-label="View manager"><svg class="ico18"><use href="#i-camera"/></svg></button>
        <button aria-label="Section"><svg class="ico18"><use href="#i-explode"/></svg></button>
        <button class="more" aria-label="Datum filters"><svg class="ico18"><use href="#i-datums"/></svg></button>
        <button aria-label="Plane display"><svg class="ico18"><use href="#i-plane"/><use href="#i-eyelet"/></svg></button>
        <button aria-label="Axis display"><svg class="ico18"><use href="#i-axis"/><use href="#i-eyelet"/></svg></button>
        <button class="pressed" aria-label="Point display"><svg class="ico18"><use href="#i-points4"/><use href="#i-eyelet"/></svg></button>
        <button aria-label="Csys display"><svg class="ico18"><use href="#i-csys"/><use href="#i-eyelet"/></svg></button>
        <button aria-label="Annotation display"><svg class="ico18"><use href="#i-note"/><use href="#i-eyelet"/></svg></button>
        <button class="pressed" aria-label="Spin center"><svg class="ico18"><use href="#i-spin"/></svg></button>
      </nav>
    </section>

    <svg class="callout" width="560" height="310" viewBox="0 0 560 310" aria-hidden="true">
      <rect x="5" y="251" width="203" height="43" rx="1" fill="none" stroke="#f00" stroke-width="4"/>
      <path d="M546 250L258 272" stroke="#f00" stroke-width="7" stroke-linecap="round"/>
      <path d="M237 274l17-7 1 13z" fill="#f00"/>
    </svg>
  </main>

  <footer class="status">
    <button class="tile pressed" aria-label="Toggle tree"><svg class="ico"><use href="#i-tree"/></svg></button>
    <button class="tile" aria-label="Toggle browser"><svg class="ico18"><use href="#i-globe"/></svg></button>
    <span class="rule"></span>
    <p>Showing feature 20 (REVOLVE_1_1) in part PRT0001.</p>
    <span class="rule wide"></span>
    <div class="lights"><i></i><i></i><i></i></div>
    <span class="rule"></span>
    <button class="find" aria-label="Find"><svg class="ico18"><use href="#i-binoc"/></svg></button>
    <span class="rule"></span>
    <label class="filter"><select aria-label="Selection filter"><option>Smart</option></select></label>
  </footer>

  <div class="orb"></div>
  <div class="watermark">
    <svg width="60" height="62" viewBox="0 0 60 62" fill="none"><g opacity=".75"><ellipse cx="23" cy="23" rx="14" ry="23" transform="rotate(-48 23 23)" stroke="#8397a2" stroke-width="4"/><path d="M38 25c8-6 19-5 19 5 0 12-12 27-22 27-9 0-16-12-15-22" stroke="#e06a6a" stroke-width="4"/><path d="M12 46c0-8 5-14 13-18" stroke="#b7c6d2" stroke-width="4"/></g></svg>
    <div>
      <strong>野火论坛</strong>
      <span>www.proewildfire.cn</span>
    </div>
  </div>
</body>
</html>
```
FILE: styles.css
```
* {
  box-sizing: border-box;
}
html {
  background: #979494;
}
body {
  position: relative;
  display: flex;
  flex-direction: column;
  height: 100vh;
  margin: 0;
  padding: 3px;
  border: 1px solid #504c4c;
  overflow: hidden;
  background: #fcfcfd content-box;
  color: #404347;
  font-family: "Liberation Sans", Arial, sans-serif;
  font-size: 13px;
}
button {
  display: flex;
  align-items: center;
  justify-content: center;
  margin: 0;
  padding: 0;
  border: 0;
  background: none;
  color: inherit;
  font: inherit;
}
h1, h2, p, ul {
  margin: 0;
  padding: 0;
}
svg {
  display: block;
  flex: none;
}
.sprite {
  position: absolute;
  width: 0;
  height: 0;
}
.ico {
  width: 16px;
  height: 16px;
}
.ico18 {
  width: 18px;
  height: 18px;
}
.ico20 {
  width: 20px;
  height: 20px;
}
.caret {
  display: inline-block;
  flex: none;
  border: 3px solid transparent;
  border-top: 4px solid #333;
  border-bottom: 0;
}
.off {
  color: #9b9da0;
}
.off .caret {
  border-top-color: #9b9da0;
}
.off .caret.dark {
  border-top-color: #333;
}

/* title bar */
.titlebar {
  display: flex;
  align-items: center;
  height: 32px;
  padding-left: 8px;
}
.quick {
  display: flex;
  align-items: center;
}
.tool {
  width: 24px;
  height: 24px;
}
.tool.pressed {
  border: 1px solid #b4b4b8;
  border-top: 2px solid #8f8f93;
  background: #ececef;
}
.drop {
  width: 14px;
  height: 24px;
}
.sep {
  width: 1px;
  height: 24px;
  margin-right: 1px;
  background: #cfcfd3;
}
.caret.barred {
  position: relative;
  border-width: 5px 4px 0;
  margin-top: 4px;
}
.caret.barred::before {
  content: "";
  position: absolute;
  top: -8px;
  left: -4px;
  width: 8px;
  height: 1px;
  background: #333;
}
.titlebar h1 {
  flex: 1;
  color: #26282b;
  font-size: 16px;
  line-height: 20px;
  text-align: center;
}
.window-buttons {
  display: flex;
  gap: 16px;
  padding-right: 11px;
}

/* ribbon tabs */
.tabrow {
  display: flex;
  align-items: flex-end;
  height: 31px;
  margin: 0 4px;
  position: relative;
  z-index: 1;
}
.tabs {
  display: flex;
  align-items: flex-end;
  margin: 0 auto 0 8px;
}
.tab {
  height: 27px;
  padding: 0 12px;
  border: 1px solid #c8cbce;
  border-left-color: #dddfe2;
  border-right: 0;
  background: #eeeff1;
  color: #717478;
  font-size: 15px;
  font-weight: bold;
}
.tab:last-child {
  border-right: 1px solid #c8cbce;
}
.tab.active {
  height: 31px;
  padding: 3px 12px 0;
  border-color: #c8cbce;
  border-bottom-color: #fcfcfd;
  border-right: 1px solid #c8cbce;
  background: #fcfcfd;
  color: #2a2c30;
}
.tab.file {
  padding: 0 8px;
  border: 1px solid #c8cbce;
}
.tab.file .caret {
  margin: 2px 0 0 2px;
  border-top-color: #717478;
}
.help-buttons {
  display: flex;
  align-items: center;
  align-self: flex-end;
  gap: 5px;
  height: 36px;
  padding-right: 4px;
}

/* ribbon */
.ribbon {
  display: flex;
  height: 116px;
  margin: -1px 4px 0;
  border: 1px solid #c8cbce;
}
.group {
  display: flex;
  flex-direction: column;
  flex: none;
  border-left: 1px solid #dcdee1;
}
.group:first-child {
  border-left: 0;
}
.group .body {
  display: flex;
  flex: 1;
  padding-top: 2px;
}
.group .center {
  justify-content: center;
}
.group > footer {
  display: flex;
  align-items: center;
  justify-content: center;
  height: 28px;
  border-top: 1px solid #c8cbce;
  background: #eeeff1;
  white-space: nowrap;
}
.group > footer .caret {
  margin: 0 0 2px 4px;
}
.checking { width: 95px; }
.visibility { width: 136px; }
.datum { width: 236px; }
.shapes { width: 98px; }
.engineering { width: 91px; }
.editing { width: 63px; }
.intent { width: 94px; }
.tols { width: 79px; }
.measure { width: 73px; }
.display { width: 136px; }
.libraries { width: 62px; }
.tools { width: 57px; }
.aids { width: 83px; }
.help { width: 57px; }
.group.rest {
  flex: 1;
}
.big {
  flex-direction: column;
  justify-content: flex-start;
  padding-top: 4px;
  line-height: 18px;
}
.art {
  width: 32px;
  height: 32px;
  margin-bottom: 7px;
}
.menu .art {
  margin-bottom: 10px;
}
.menu .caret {
  margin-top: 5px;
}
.w48 { width: 48px; }
.w54 { width: 54px; }
.w60 { width: 60px; }
.w70 { width: 70px; }
.end {
  margin: 0 auto;
}
.fill {
  flex: 1;
}
.stack {
  display: flex;
  flex-direction: column;
}
.row {
  justify-content: flex-start;
  gap: 4px;
  height: 27px;
  white-space: nowrap;
}
.row .caret {
  margin: 0 0 2px 4px;
}
.inset {
  padding: 0 15px 0 18px;
}
/* the second column starts a little left of the first one's arrows */
.inset + .stack {
  margin-left: -7px;
}
.loose {
  align-items: center;
}
.loose .row:nth-child(1) {
  height: 16px;
}
.loose .row:nth-child(2) {
  height: 28px;
}
.loose .row:nth-child(3) {
  height: 36px;
}
.loose .caret {
  margin-left: 0;
}
.wide {
  gap: 14px;
}
.gallery {
  flex-direction: column;
  justify-content: flex-start;
  width: 77px;
  height: 82px;
  margin-left: 3px;
  border: 1px solid #d9dbde;
  line-height: 18px;
}
.gallery .preview {
  display: flex;
  align-items: center;
  justify-content: center;
  width: 100%;
  height: 40px;
  margin-bottom: 3px;
  border-bottom: 1px solid #d9dbde;
  background: #f8f8f9;
}
.gallery .caret {
  margin: 0 0 3px 2px;
}

/* work area */
main {
  position: relative;
  display: flex;
  flex: 1;
  min-height: 0;
  padding-right: 4px;
}
.side {
  display: flex;
  flex-direction: column;
  width: 350px;
  padding: 13px 4px 11px;
}
.side-tabs {
  display: flex;
  height: 30px;
  position: relative;
  z-index: 1;
}
.side-tabs button {
  width: 30px;
  border: 1px solid #c8cbce;
  border-left: 0;
  background: #eeeff1;
}
.side-tabs .active {
  border-left: 1px solid #c8cbce;
  border-bottom-color: #fcfcfd;
  background: #fcfcfd;
}
.panel {
  flex: 1;
  margin-top: -1px;
  border: 1px solid #c8cbce;
  border-width: 1px 3px 2px 1px;
}
.panel-head {
  display: flex;
  align-items: center;
  height: 29px;
  padding-left: 20px;
  border-bottom: 1px solid #c8cbce;
}
.panel-head h2 {
  flex: 1;
  font-size: 14px;
}
.panel-head .drop {
  margin: 0 0 2px 3px;
}
.panel-head .drop + button {
  margin-left: 5px;
}
.tree {
  list-style: none;
  font-size: 14px;
}
.tree li {
  display: flex;
  align-items: center;
  gap: 3px;
  height: 20px;
  padding-left: 24px;
}
.tree .root {
  padding-left: 4px;
}
.tree .closed {
  padding-left: 10px;
}
.tree .closed::before {
  content: "";
  margin-right: 3px;
  border: 4px solid transparent;
  border-left: 8px solid #8b8d90;
  border-right: 0;
}
.canvas {
  position: relative;
  flex: 1;
  min-width: 0;
  background: linear-gradient(#9b988b, #e1dfd2);
}
.scene {
  width: 100%;
  height: 100%;
}
.curve {
  fill: none;
  stroke: #2f93dd;
}
.labels {
  fill: #a6712c;
  font-size: 13px;
}
.tolerance {
  fill: #4a4a46;
  font-size: 11px;
  text-anchor: middle;
}
.viewbar {
  position: absolute;
  top: 8px;
  left: 50%;
  display: flex;
  padding: 0 5px;
  border: 1px solid #d0d4da;
  background: #f0f1f4;
  transform: translateX(-50%);
}
.viewbar button {
  position: relative;
  width: 27px;
  height: 25px;
  border-left: 1px solid #d5d9e0;
  background: #fff;
}
.viewbar .pressed {
  border: 1px solid #c4c6ca;
  border-top: 2px solid #909296;
  background: #e9e9ec;
}
.viewbar .more::after {
  content: "";
  position: absolute;
  right: 2px;
  bottom: 3px;
  border-left: 4px solid transparent;
  border-bottom: 4px solid #555;
}
.callout {
  position: absolute;
  top: 0;
  left: 0;
  margin-left: 1px;
  pointer-events: none;
}

/* status bar */
.status {
  display: flex;
  align-items: center;
  height: 35px;
  padding: 0 18px 0 6px;
  border-top: 2px solid #98989a;
  background: #eeeff2;
}
.tile {
  width: 22px;
  height: 22px;
  margin: 2px 4px 0 0;
  border: 1px solid #c5c6c9;
  background: #f6f6f8;
}
.tile.pressed {
  border-top: 2px solid #909296;
  color: #26375c;
}
.rule {
  width: 1px;
  height: 26px;
  margin: 0 3px;
  background: #d2d3d7;
}
.tile + .rule {
  margin-left: 5px;
}
.status p {
  display: flex;
  align-items: center;
  flex: 1;
  gap: 5px;
  padding: 0 0 2px 4px;
}
.status p::before {
  content: "";
  width: 5px;
  height: 5px;
  border-radius: 50%;
  background: #00f;
}
.rule.wide {
  width: 37px;
  border: 1px solid #d2d3d7;
  border-width: 0 1px;
  background: none;
}
.lights {
  display: flex;
  align-items: center;
  gap: 1px;
}
.lights i {
  width: 6px;
  height: 6px;
  border-radius: 50%;
  background: #cfd0d2;
}
.lights i:first-child {
  width: 11px;
  height: 11px;
  background: #4bd44b;
}
.find {
  width: 40px;
  height: 25px;
  border: 1px solid #b9babd;
  border-radius: 3px;
  background: linear-gradient(#fff, #e9e9eb);
}
.filter {
  position: relative;
  width: 178px;
  margin-left: 94px;
}
.filter select {
  width: 100%;
  height: 25px;
  padding: 0 6px;
  border: 1px solid #b9babd;
  border-radius: 0;
  background: #f4f4f6;
  color: #303236;
  font: inherit;
  appearance: none;
}
.filter::after {
  content: "";
  position: absolute;
  top: 10px;
  right: 4px;
  border: 4px solid transparent;
  border-top: 5px solid #333;
  border-bottom: 0;
}
.filter::before {
  content: "";
  position: absolute;
  top: 1px;
  right: 14px;
  width: 1px;
  height: 23px;
  background: #c5c6c9;
}

/* taskbar orb and site mark lie over the frame */
.orb {
  position: absolute;
  bottom: -37px;
  left: 10px;
  width: 44px;
  height: 44px;
  border: 2px solid #2c5d86;
  border-radius: 50%;
  background: radial-gradient(circle at 40% 20%, #c0695a, #8fb4cf 30%);
}
.watermark {
  position: absolute;
  right: 3px;
  bottom: 3px;
  display: flex;
  width: 207px;
  height: 63px;
  background: rgba(250, 252, 250, 0.4);
  pointer-events: none;
}
.watermark div {
  display: flex;
  flex-direction: column;
  white-space: nowrap;
}
.watermark strong {
  padding-left: 10px;
  color: rgba(80, 185, 115, 0.65);
  font-family: "Noto Sans CJK SC", sans-serif;
  font-size: 29px;
  line-height: 40px;
}
.watermark span {
  color: rgba(150, 215, 200, 0.75);
  font-size: 16px;
  line-height: 18px;
}
```
